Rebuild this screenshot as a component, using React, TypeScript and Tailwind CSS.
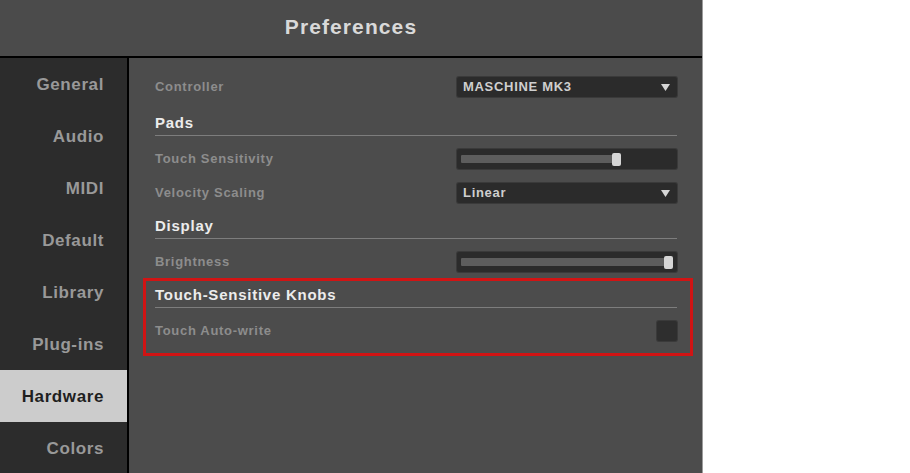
const tabs = ["General", "Audio", "MIDI", "Default", "Library", "Plug-ins", "Hardware", "Colors"];

function Caret() {
  return (
    <svg width="9" height="7" viewBox="0 0 9 7" className="shrink-0">
      <polygon points="0,0 9,0 4.5,7" fill="#d6d6d6" />
    </svg>
  );
}

function Dropdown({ value }: { value: string }) {
  return (
    <div className="w-[220px] h-[20px] bg-[#2b2b2b] rounded-[2px] flex items-center justify-between pl-[6px] pr-[7px] shadow-[0_0_0_1px_#3a3a3a]">
      <span className="text-[13px] font-bold text-[#cfcfcf] tracking-[0.7px]">{value}</span>
      <Caret />
    </div>
  );
}

function Slider({ pct }: { pct: number }) {
  const left = `calc((100% - 9px) * ${pct})`;
  return (
    <div className="w-[220px] h-[20px] bg-[#2b2b2b] rounded-[2px] flex items-center px-[4px] shadow-[0_0_0_1px_#3a3a3a]">
      <div className="relative flex-1 h-[8px]">
        <div className="h-full bg-[#5d5d5d] rounded-[1px]" style={{ width: `calc(${left} + 6px)` }} />
        <div className="absolute top-[-2px] w-[9px] h-[13px] bg-[#d6d6d6] rounded-[2px]" style={{ left }} />
      </div>
    </div>
  );
}

function Row({ label, children }: { label: string; children: React.ReactNode }) {
  return (
    <div className="h-[20px] flex items-center justify-between">
      <span className="text-[13px] font-bold text-[#8d8d8d] tracking-[0.7px]">{label}</span>
      {children}
    </div>
  );
}

function Heading({ text }: { text: string }) {
  return (
    <div className="pb-[2px] border-b border-[#7d7d7d] leading-[20px] text-[15px] font-bold text-[#ececec] tracking-[0.75px]">
      {text}
    </div>
  );
}

export default function App() {
  return (
    <div className="w-[910px] h-[473px] bg-white" style={{ fontFamily: '"Liberation Sans", Arial, sans-serif' }}>
      <div className="w-[703px] h-[473px] flex flex-col border-r border-[#9c9c9c] overflow-hidden">
        <div className="h-[58px] shrink-0 bg-[#4b4b4b] border-b-[2px] border-black flex items-center justify-center pb-[2px]">
          <span className="text-[21px] font-bold text-[#d9d9d9] tracking-[1.1px]">Preferences</span>
        </div>
        <div className="flex flex-1 min-h-0">
          <div className="w-[129px] shrink-0 bg-[#2c2c2c] border-r-[2px] border-black flex flex-col">
            {tabs.map((t) =>
              t === "Hardware" ? (
                <div key={t} className="h-[52px] shrink-0 bg-[#cccccc] flex items-center justify-end pr-[23px] pt-[1px]">
                  <span className="text-[17px] font-bold text-[#1f1f1f] tracking-[0.6px]">{t}</span>
                </div>
              ) : (
                <div key={t} className="h-[52px] shrink-0 flex items-center justify-end pr-[23px] pt-[1px]">
                  <span className="text-[17px] font-bold text-[#999999] tracking-[0.6px]">{t}</span>
                </div>
              )
            )}
          </div>
          <div className="flex-1 bg-[#4c4c4c] pt-[19px] pl-[26px] pr-[25px]">
            <Row label="Controller">
              <Dropdown value="MASCHINE MK3" />
            </Row>
            <div className="mt-[16px]">
              <Heading text="Pads" />
            </div>
            <div className="mt-[13px]">
              <Row label="Touch Sensitivity">
                <Slider pct={0.745} />
              </Row>
            </div>
            <div className="mt-[14px]">
              <Row label="Velocity Scaling">
                <Dropdown value="Linear" />
              </Row>
            </div>
            <div className="mt-[13px]">
              <Heading text="Display" />
            </div>
            <div className="mt-[13px]">
              <Row label="Brightness">
                <Slider pct={1} />
              </Row>
            </div>
            <div className="mt-[6px] -ml-[12px] -mr-[16px] border-[3px] border-[#d11414] pl-[9px] pr-[13px] pt-[4px] pb-[12px]">
              <Heading text="Touch-Sensitive Knobs" />
              <div className="mt-[13px]">
                <Row label="Touch Auto-write">
                  <div className="w-[20px] h-[20px] bg-[#2e2e2e] rounded-[2px] shadow-[0_0_0_1px_#3a3a3a]" />
                </Row>
              </div>
            </div>
          </div>
        </div>
      </div>
    </div>
  );
}
